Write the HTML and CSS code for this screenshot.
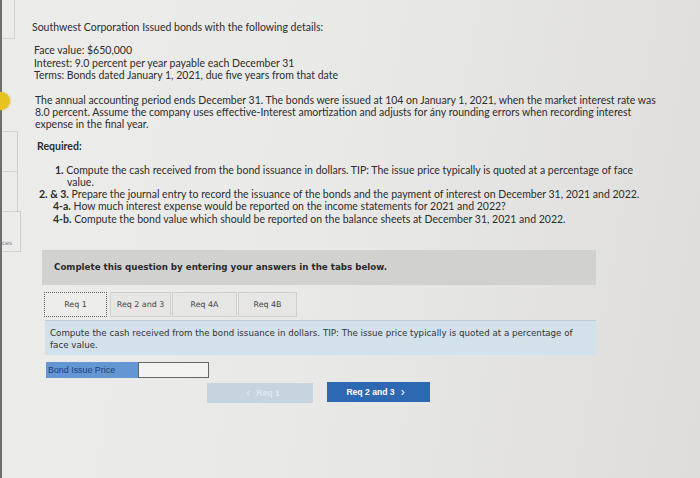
FILE: index.html
```html
<!DOCTYPE html>
<html>
<head>
<meta charset="utf-8">
<link rel="stylesheet" href="styles.css">
</head>
<body>
<div class="screen">
  <aside class="side">
    <div class="side-top"></div>
    <div class="side-dot"></div>
    <div class="side-box"></div>
    <div class="side-box"></div>
    <div class="side-box side-label">ces</div>
  </aside>
  <main class="main">
    <p class="title">Southwest Corporation Issued bonds with the following details:</p>
    <div class="details">
      <div>Face value: $650,000</div>
      <div>Interest: 9.0 percent per year payable each December 31</div>
      <div>Terms: Bonds dated January 1, 2021, due five years from that date</div>
    </div>
    <p class="para">The annual accounting period ends December 31. The bonds were issued at 104 on January 1, 2021, when the market interest rate was 8.0 percent. Assume the company uses effective-Interest amortization and adjusts for ány rounding errors when recording interest expense in the final year.</p>
    <p class="req">Required:</p>
    <ol class="reqlist">
      <li class="item1"><b>1.</b> Compute the cash received from the bond issuance in dollars. TIP: The issue price typically is quoted at a percentage of face value.</li>
      <li class="item2"><b>2. &amp; 3.</b> Prepare the journal entry to record the issuance of the bonds and the payment of interest on December 31, 2021 and 2022.</li>
      <li class="item4"><b>4-a.</b> How much interest expense would be reported on the income statements for 2021 and 2022?</li>
      <li class="item4"><b>4-b.</b> Compute the bond value which should be reported on the balance sheets at December 31, 2021 and 2022.</li>
    </ol>
    <section class="work">
      <div class="banner">Complete this question by entering your answers in the tabs below.</div>
      <div class="tabs">
        <div class="tab tab-active">Req 1</div>
        <div class="tab">Req 2 and 3</div>
        <div class="tab">Req 4A</div>
        <div class="tab">Req 4B</div>
      </div>
      <div class="instr">Compute the cash received from the bond issuance in dollars. TIP: The issue price typically is quoted at a percentage of face value.</div>
      <div class="answer">
        <div class="ans-label">Bond Issue Price</div>
        <div class="ans-input"></div>
      </div>
      <div class="nav">
        <div class="btn btn-prev"><span class="chev">&lsaquo;</span> Req 1</div>
        <div class="btn btn-next">Req 2 and 3 <span class="chev">&rsaquo;</span></div>
      </div>
    </section>
  </main>
</div>
</body>
</html>
```
FILE: styles.css
```css
html, body {
  margin: 0;
  padding: 0;
}
body {
  width: 700px;
  height: 478px;
  overflow: hidden;
  background: linear-gradient(100deg, #ececea 0%, #e9e9e7 45%, #dedddb 100%);
}
.screen {
  display: flex;
  height: 478px;
  border-left: 2px solid #6e6e6e;
  box-sizing: border-box;
}
.side {
  width: 18px;
  flex: none;
  display: flex;
  flex-direction: column;
}
.side-top {
  width: 12px;
  height: 38px;
  border: 1px solid #d4d4d2;
  border-left: none;
  border-top: none;
}
.side-dot {
  width: 18px;
  height: 18px;
  border-radius: 50%;
  background: #e8c21f;
  margin: 53px 0 0 -10px;
  box-shadow: 0 0 3px rgba(200,160,0,0.5);
}
.side-box {
  width: 16px;
  height: 41px;
  border: 1px solid #d0d0ce;
  border-left: none;
  margin-top: -1px;
  box-sizing: border-box;
}
.side-dot + .side-box {
  margin-top: 21px;
}
.side-label {
  font-family: "DejaVu Sans", sans-serif;
  font-size: 6px;
  color: #777;
  display: flex;
  align-items: flex-end;
  padding-bottom: 5px;
  width: 19px;
}
.main {
  flex: 1;
  padding: 21px 0 0 12px;
  font-family: Lato, "Open Sans", sans-serif;
  font-size: 10.5px;
  color: #2d2d2d;
}
.title {
  margin: 0 0 10px 0;
  line-height: 13px;
}
.details {
  margin-left: 2px;
  line-height: 12.5px;
}
.para {
  margin: 12px 0 0 3px;
  width: 630px;
  line-height: 12px;
}
.req {
  margin: 10px 0 0 5px;
  font-weight: bold;
  line-height: 12px;
}
.reqlist {
  list-style: none;
  margin: 12px 0 0 0;
  padding: 0;
  line-height: 12.3px;
}
.reqlist b {
  font-weight: bold;
}
.item1 {
  margin-left: 23px;
  padding-left: 12px;
  text-indent: -12px;
  width: 585px;
}
.item2 {
  margin-left: 7px;
}
.item4 {
  margin-left: 21px;
}
.work {
  margin: 25px 0 0 10px;
  font-family: "DejaVu Sans", Verdana, sans-serif;
  font-size: 8.7px;
  color: #333;
}
.banner {
  width: 554px;
  height: 35px;
  box-sizing: border-box;
  background: #d1d1cf;
  font-weight: bold;
  padding-left: 12px;
  display: flex;
  align-items: center;
  color: #2a2a2a;
}
.tabs {
  display: flex;
  margin: 7px 0 0 2px;
  height: 25px;
}
.tab {
  height: 25px;
  box-sizing: border-box;
  border: 1px solid #cfcfcd;
  background: #e6e6e4;
  display: flex;
  align-items: center;
  justify-content: center;
  color: #444;
  margin-right: 1px;
  font-size: 7.9px;
}
.tab:nth-child(1) { width: 63px; }
.tab:nth-child(2) { width: 61px; }
.tab:nth-child(3) { width: 65px; }
.tab:nth-child(4) { width: 59px; }
.tab-active {
  border: 1px dotted #666;
  background: #ededeb;
  margin-right: 3px;
}
.instr {
  margin: 3px 0 0 3px;
  width: 551px;
  height: 35px;
  box-sizing: border-box;
  background: #d2e1ea;
  border-top: 1px solid #b9cdd9;
  padding: 6px 8px 0 5px;
  line-height: 12.5px;
  color: #333;
}
.answer {
  display: flex;
  margin: 7px 0 0 4px;
  height: 16px;
}
.ans-label {
  width: 92px;
  background: #6496d4;
  color: #1f3f78;
  font-family: "Liberation Sans", Arial, sans-serif;
  font-size: 8.9px;
  display: flex;
  align-items: center;
  padding-left: 2px;
  box-sizing: border-box;
}
.ans-input {
  width: 71px;
  background: #f3f3f2;
  border: 1px solid #666;
  box-sizing: border-box;
}
.nav {
  display: flex;
  margin: 5px 0 0 165px;
  gap: 14px;
  font-family: "Liberation Sans", Arial, sans-serif;
  font-size: 8.6px;
  font-weight: bold;
}
.btn {
  height: 20px;
  display: flex;
  align-items: center;
  justify-content: center;
  box-sizing: border-box;
}
.btn-prev {
  width: 106px;
  background: #c6d4df;
  color: #dfe8ef;
}
.btn-next {
  width: 103px;
  background: #2f68b2;
  color: #ffffff;
  margin-top: -1px;
}
.chev {
  font-size: 12px;
  font-weight: normal;
  margin: 0 6px;
  line-height: 1;
}
```
